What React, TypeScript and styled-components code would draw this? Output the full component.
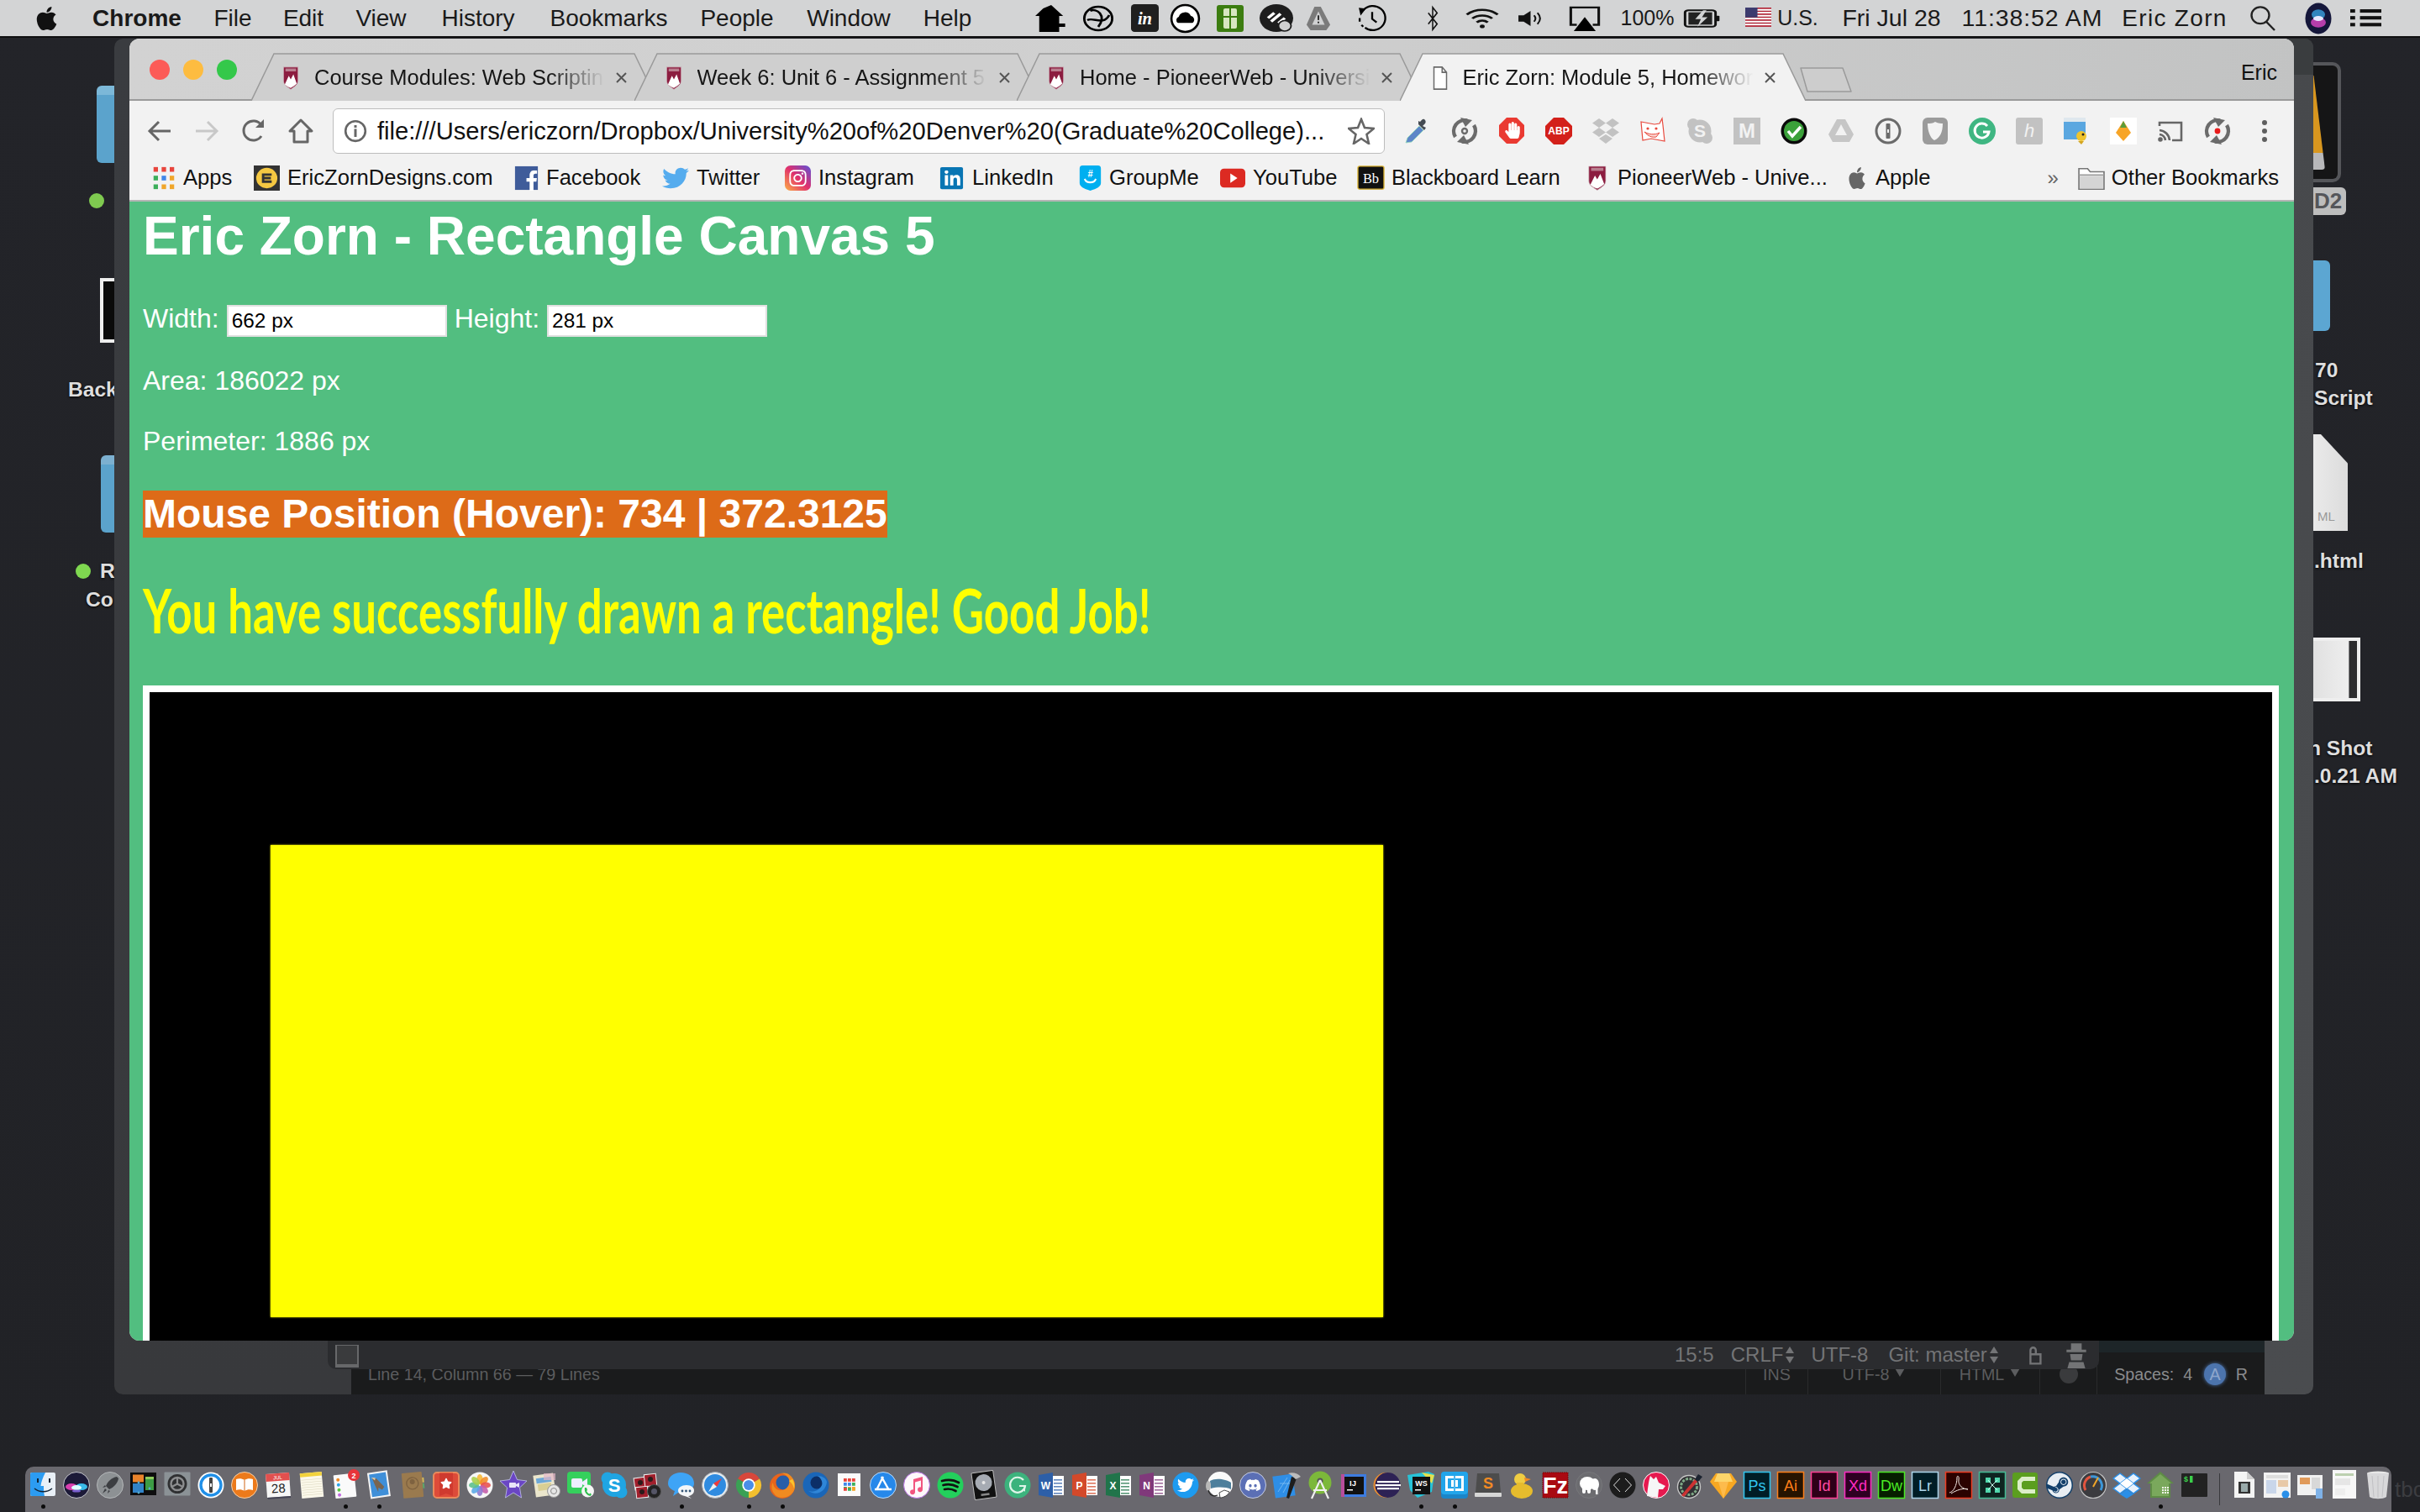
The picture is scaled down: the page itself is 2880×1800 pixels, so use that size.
import React from "react";
import styled, { createGlobalStyle } from "styled-components";
import { FaApple, FaDiscord, FaSteam, FaFacebookF, FaInstagram, FaLinkedinIn, FaTwitter, FaStar, FaHandPaper } from "react-icons/fa";

const SANS = `"Liberation Sans", Arial, sans-serif`;

const Global = createGlobalStyle`
  html, body { margin: 0; padding: 0; background: #242529; }
  * { box-sizing: border-box; }
  #root { width: 2880px; height: 1800px; overflow: hidden; }
`;

const Glyph = styled.svg<{ $s: number; $h?: number }>`
  display: block;
  flex: none;
  width: ${(p) => p.$s}px;
  height: ${(p) => p.$h ?? p.$s}px;
  overflow: visible;
`;

const T = (x: number, y: number, size: number, fill: string, s: string, weight: number = 700, anchor: string = "middle") => (
  <text x={x} y={y} fontSize={size} fill={fill} fontWeight={weight} textAnchor={anchor} fontFamily={SANS}>{s}</text>
);

const office = (c: string, l: string) => (
  <g>
    <rect x="13" y="5" width="18" height="23" fill="#fff" />
    {[9, 13, 17, 21, 25].map((y) => <rect key={y} x="19" y={y} width="10" height="1.6" fill={c} opacity=".75" />)}
    <path d="M1 4 L18 1 V31 L1 28Z" fill={c} />
    {T(9.5, 21, 12, "#fff", l)}
  </g>
);

const adobe = (b: string, bg: string, l: string, c: string) => (
  <g>
    <rect x="0.5" y="0.5" width="31" height="31" fill={bg} stroke={b} strokeWidth="1.5" />
    {T(16, 23, 18, c, l, 400)}
  </g>
);

const syncIcon = (center: React.ReactNode) => (
  <g fill="none" stroke="#6b6b6b" strokeWidth="4.4">
    <path d="M5 23 A13 13 0 0 1 19 3.5" />
    <path d="M27 9 A13 13 0 0 1 13 28.5" />
    <path d="M11 0 L25 3 L17 11Z" fill="#6b6b6b" stroke="none" />
    <path d="M21 32 L7 29 L15 21Z" fill="#6b6b6b" stroke="none" />
    {center}
  </g>
);

const shield = (
  <g>
    <path d="M1 1 H23 V20 C23 26 16 29 12 32 C8 29 1 26 1 20Z" fill="#8c1d40" stroke="#d9c9cd" strokeWidth=".8" />
    <path d="M3 25 L9 13 L12 18 L16 11 L21 24 C18 27 14 29 12 30 C9 29 5 27 3 25Z" fill="#fff" />
    <rect x="4" y="3" width="16" height="4" fill="#b97f8f" />
  </g>
);

const ICONS: Record<string, React.ReactNode> = {
  finder: (
    <g>
      <rect x="1" y="1" width="30" height="28" rx="2" fill="#e9f0f7" />
      <path d="M3 1 H19 C16 7 14 12 13.5 17 H17 C17 21 17 25 18 29 H3 A2 2 0 0 1 1 27 V3 A2 2 0 0 1 3 1Z" fill="#2c9cf2" />
      <rect x="9" y="8" width="2" height="5" fill="#123" />
      <rect x="23" y="8" width="2" height="5" fill="#123" />
      <path d="M6 20 C12 25 21 25 27 20" fill="none" stroke="#123" strokeWidth="1.3" />
    </g>
  ),
  siri: (
    <g>
      <circle cx="16" cy="16" r="15.5" fill="#1c1a38" stroke="#c6c7cc" strokeWidth="1" />
      <ellipse cx="10" cy="18" rx="7" ry="4" fill="#d83fb0" />
      <ellipse cx="22" cy="18" rx="7" ry="4" fill="#39b8e8" />
      <ellipse cx="16" cy="19" rx="6" ry="3" fill="#dff" />
      <ellipse cx="16" cy="23" rx="5" ry="1.5" fill="#7a5fd0" />
    </g>
  ),
  launchpad: (
    <g>
      <circle cx="16" cy="16" r="15.5" fill="#8d9194" stroke="#b4b7b9" />
      <path d="M24 6 C18 7 13 12 11 17 L15 21 C20 19 25 14 26 8Z M11 18 L7 19 L10 16Z M14 22 L13 26 L16 23Z M10 20 L12 22 L7 26Z" fill="#3c3e42" />
    </g>
  ),
  dashboard: (
    <g>
      <rect x="0" y="1" width="31" height="27" fill="#0d0d0e" />
      <rect x="3" y="3.5" width="13" height="9" fill="#e9832b" />
      <rect x="18" y="6" width="10" height="16" fill="#3d9c45" />
      <rect x="18" y="6" width="10" height="3" fill="#8ccb5d" />
      <rect x="3" y="14" width="13" height="11" fill="#3183c8" />
      <circle cx="10" cy="13" r="1.4" fill="#5ac" /><circle cx="23" cy="20" r="1.4" fill="#5ac" /><circle cx="10" cy="25" r="1.4" fill="#5ac" />
    </g>
  ),
  prefs: (
    <g>
      <rect x="0.5" y="0.5" width="31" height="28" rx="1" fill="#8b9296" />
      <circle cx="16" cy="14.5" r="11.5" fill="#2f3032" />
      <circle cx="16" cy="14.5" r="7.5" fill="none" stroke="#8c8d8f" strokeWidth="2.4" />
      <path d="M16 14.5 L16 7 M16 14.5 L9.5 18 M16 14.5 L22.5 18" stroke="#8c8d8f" strokeWidth="2.2" />
    </g>
  ),
  onepass: (
    <g>
      <circle cx="16" cy="16" r="15.5" fill="#fff" />
      <circle cx="16" cy="16" r="12" fill="#fff" stroke="#1f8fe8" strokeWidth="3.4" />
      <rect x="14" y="7" width="4" height="18" rx="1" fill="#444" />
      <rect x="15" y="14" width="2" height="4" fill="#fff" />
    </g>
  ),
  books: (
    <g>
      <circle cx="16" cy="16" r="15.5" fill="#ec7a1b" stroke="#f4cfa8" />
      <path d="M16 10 C13 8 9 8 6 9 V22 C9 21 13 21 16 23 C19 21 23 21 26 22 V9 C23 8 19 8 16 10Z" fill="#fff" />
      <path d="M16 10 V23" stroke="#d06716" strokeWidth="1" />
    </g>
  ),
  calendar: (
    <g transform="rotate(-4 16 16)">
      <rect x="2" y="2" width="28" height="28" fill="#f7f7f7" />
      <rect x="2" y="2" width="28" height="9" fill="#e2504e" />
      {T(16, 9, 6, "#fff", "JUL", 400)}
      {T(16, 25, 15, "#222", "28", 400)}
      <path d="M2 30 H30 V32 H3Z" fill="#445" />
    </g>
  ),
  notes: (
    <g transform="rotate(-5 16 16)">
      <rect x="3" y="1" width="26" height="30" fill="#fbf8ea" />
      <rect x="3" y="1" width="26" height="4.5" fill="#f2d23c" />
      {[9, 12, 15, 18, 21, 24, 27].map((y) => <rect key={y} x="4" y={y} width="24" height=".5" fill="#d8d3ba" />)}
    </g>
  ),
  reminders: (
    <g>
      <g transform="rotate(-6 15 17)">
        <rect x="3" y="3" width="25" height="28" rx="1" fill="#fafafa" />
        <circle cx="8" cy="9" r="2" fill="#f08a24" /><circle cx="8" cy="15" r="2" fill="#2da6ea" /><circle cx="8" cy="21" r="2" fill="#58c943" /><circle cx="8" cy="27" r="2" fill="#c36ce3" />
      </g>
      <circle cx="26" cy="4" r="7" fill="#e8343a" />
      {T(26, 7.5, 9, "#fff", "2")}
    </g>
  ),
  mail: (
    <g transform="rotate(-8 15 16)">
      <rect x="4" y="0" width="24" height="31" fill="#f4f4f4" />
      <rect x="6" y="2" width="20" height="27" fill="#3f8fd8" />
      <path d="M9 7 L14 8 L22 19 L19 22 L15 19 L14 24 L12 18Z" fill="#7a6550" />
      <path d="M8 6 L13 7 L12 10Z" fill="#d8c8a8" />
    </g>
  ),
  contacts: (
    <g transform="rotate(-5 15 16)">
      <rect x="4" y="1" width="24" height="30" rx="1" fill="#9a7a4e" />
      <rect x="28" y="8" width="2" height="6" fill="#d8bb58" /><rect x="28" y="15" width="2" height="6" fill="#5da76a" />
      <circle cx="16" cy="14" r="7" fill="none" stroke="#7e6240" strokeWidth="1.4" />
      <circle cx="16" cy="12" r="3" fill="#7e6240" />
    </g>
  ),
  wunderlist: (
    <g>
      <rect x="1" y="1" width="30" height="30" rx="4" fill="#dd4b39" stroke="#e98a5b" strokeWidth="2" />
      <path d="M8 1.5 H24 V29 L16 26 L8 29Z" fill="#cf3a2f" />
      <FaStar x={9} y={7} size={14} color="#fff" />
    </g>
  ),
  photos: (
    <g>
      <circle cx="16" cy="16" r="15.5" fill="#f6f6f6" />
      {["#f7b733", "#f28c28", "#e8504f", "#c55ba8", "#8c78d0", "#5aa9e6", "#5bbf8a", "#a8cf4a"].map((c, i) => (
        <ellipse key={c} cx="16" cy="9" rx="3.6" ry="6" fill={c} opacity=".88" transform={`rotate(${i * 45} 16 16)`} />
      ))}
    </g>
  ),
  imovie: (
    <g>
      <path d="M16 -1 L20.5 9.5 L32 11 L23.5 19 L25.5 31 L16 25 L6.5 31 L8.5 19 L0 11 L11.5 9.5Z" fill="#6a46c4" stroke="#c3c6ec" strokeWidth=".8" />
      <rect x="11" y="13" width="8" height="6" rx="1" fill="#e8e4f8" /><path d="M19 15 L23 13 V19 L19 17Z" fill="#e8e4f8" />
    </g>
  ),
  preview: (
    <g>
      <rect x="1" y="3" width="24" height="26" fill="#ebe6cd" transform="rotate(-8 13 16)" />
      <rect x="4" y="7" width="18" height="6" fill="#6da8d8" transform="rotate(-8 13 16)" />
      <rect x="5" y="14" width="16" height="8" fill="#d9cf94" transform="rotate(-8 13 16)" />
      <rect x="12" y="2" width="14" height="8" fill="#e4b7c8" opacity=".7" />
      <circle cx="24" cy="23" r="7.5" fill="#e6e6e6" stroke="#999" />
      <circle cx="24" cy="23" r="3.5" fill="none" stroke="#888" />
    </g>
  ),
  facetime: (
    <g>
      <rect x="0" y="0" width="28" height="26" rx="4" fill="#35d05c" />
      <rect x="5" y="8" width="13" height="11" rx="2" fill="#eef" />
      <path d="M18 12 L24 8 V19 L18 15Z" fill="#eef" />
      <circle cx="24.5" cy="23" r="7.5" fill="#f5f5f5" />
      <path d="M21 19 L23 19 L24 22 L23 23 C24 25 25 26 26.5 26.5 L27.5 25.5 L29 27 L27.5 29 C23 28 20 24 21 19Z" fill="#2ebd4e" />
    </g>
  ),
  skype: (
    <g>
      <circle cx="16" cy="16" r="14" fill="#1fa5e3" /><circle cx="8" cy="8" r="7.5" fill="#1fa5e3" /><circle cx="24" cy="24" r="7.5" fill="#1fa5e3" />
      {T(16, 23.5, 22, "#fff", "S")}
    </g>
  ),
  photobooth: (
    <g>
      <rect x="0" y="7" width="14" height="14" fill="#a01f2c" stroke="#eee" transform="rotate(-8 7 14)" />
      <rect x="12" y="3" width="14" height="14" fill="#a01f2c" stroke="#eee" transform="rotate(-6 19 10)" />
      <rect x="2" y="18" width="14" height="13" fill="#a01f2c" stroke="#eee" transform="rotate(-6 9 24)" />
      <circle cx="7" cy="13" r="3" fill="#2b1b1b" /><circle cx="19" cy="9" r="3" fill="#2b1b1b" /><circle cx="9" cy="24" r="3" fill="#2b1b1b" />
      <circle cx="23.5" cy="23.5" r="8" fill="#222" stroke="#555" /><circle cx="23.5" cy="23.5" r="3.5" fill="#556" />
    </g>
  ),
  messages: (
    <g>
      <path d="M15 1 C24 1 31 6 31 14 C31 20 24 25 15 25 L12 25 L6 29 L8 23 C3 21 0 18 0 14 C0 6 7 1 15 1Z" fill="#3ea4f6" />
      <path d="M22 16 C28 16 31 19 31 22.5 C31 26 28 28.5 24 29 L28 32 L20 29 C15 28 12 26 12 22.5 C12 19 16 16 22 16Z" fill="#f4f6f8" />
      <circle cx="17" cy="23" r="1.4" fill="#357" /><circle cx="21.5" cy="23" r="1.4" fill="#357" /><circle cx="26" cy="23" r="1.4" fill="#357" />
    </g>
  ),
  safari: (
    <g>
      <circle cx="16" cy="16" r="15.5" fill="#e9edf0" stroke="#a9aeb3" />
      <circle cx="16" cy="16" r="13" fill="#2f8be0" />
      <path d="M24 8 L14 14 L18 18Z" fill="#ee3b3b" />
      <path d="M8 24 L14 14 L18 18Z" fill="#f0f0f0" />
    </g>
  ),
  chrome: (
    <g>
      <path d="M16 16 L3 8.5 A15 15 0 0 1 29 8.5Z" fill="#d8473b" />
      <path d="M16 16 L29 8.5 A15 15 0 0 1 16 31Z" fill="#f3c02f" />
      <path d="M16 16 L16 31 A15 15 0 0 1 3 8.5Z" fill="#3aa154" />
      <circle cx="16" cy="16" r="7.7" fill="#fff" />
      <circle cx="16" cy="16" r="6" fill="#4a8ee8" />
    </g>
  ),
  firefox: (
    <g>
      <circle cx="16" cy="17" r="15" fill="#e8641c" />
      <circle cx="17" cy="13" r="8.5" fill="#285ea8" />
      <path d="M30 11 C27 3 20 0 14 2 C18 2 21 4 23 7 C26 12 24 20 16 22 C10 23 5 19 5 13 C2 17 3 26 11 30 C20 33 29 28 31 19 C31 16 31 13 30 11Z" fill="#f08b21" />
      <path d="M28 9 C30 12 31 16 30 20 C29 16 27 13 24 11Z" fill="#fbc52e" />
    </g>
  ),
  ffdev: (
    <g>
      <circle cx="16" cy="16" r="15.5" fill="#1a66b8" />
      <circle cx="17" cy="13" r="7.5" fill="#0c2f67" />
      <path d="M29 12 C28 24 16 30 6 22 C10 25 18 24 22 18 C25 14 23 8 18 5 C24 5 28 8 29 12Z" fill="#2f86d8" />
    </g>
  ),
  grid: (
    <g>
      <rect x="2" y="2" width="27" height="27" fill="#fbfbfb" />
      {["#e8453c", "#e8453c", "#e8453c", "#3f87e8", "#3f87e8", "#3cae5a", "#3cae5a", "#f0a62a", "#f0a62a"].map((c, i) => (
        <rect key={i} x={9 + (i % 3) * 5} y={8 + Math.floor(i / 3) * 5} width="3.8" height="3.8" fill={c} />
      ))}
      {["#e8453c", "#3cae5a", "#f0a62a"].map((c, i) => <rect key={c} x={9 + i * 5} y="19" width="3.8" height="3.8" fill={c} />)}
    </g>
  ),
  appstore: (
    <g>
      <circle cx="16" cy="16" r="15.5" fill="#2688ea" stroke="#bcdcfa" />
      <path d="M16 6 L8 22 M14 6 L23 22 M6 21 H26" stroke="#fff" strokeWidth="2.4" fill="none" />
    </g>
  ),
  itunes: (
    <g>
      <circle cx="16" cy="16" r="15.5" fill="#fdf8fb" stroke="#b66fe0" strokeWidth="1" />
      <path d="M12 9 L23 6 V21 A3 3 0 1 1 21 18.5 V10.5 L14 12.5 V24 A3 3 0 1 1 12 21.5Z" fill="#f2557f" />
    </g>
  ),
  spotify: (
    <g>
      <circle cx="16" cy="16" r="15.5" fill="#23d05c" />
      <path d="M6 11 C13 9 20 9.5 26 13 M7.5 16 C13 14.5 19 15 24.5 18 M9 21 C13.5 20 18 20.5 22.5 23" fill="none" stroke="#111" strokeWidth="2.7" strokeLinecap="round" />
    </g>
  ),
  logic: (
    <g transform="rotate(-8 16 16)">
      <rect x="3" y="0" width="26" height="32" rx="1" fill="#111" stroke="#bbb" />
      <circle cx="16" cy="13" r="10" fill="#a6abb3" />
      <circle cx="16" cy="13" r="2" fill="#e8e8e8" />
      <rect x="11" y="26" width="10" height="2.5" fill="#888" />
    </g>
  ),
  gram: (
    <g>
      <circle cx="16" cy="16" r="15.5" fill="#3cb37d" />
      <path d="M23 10 A9 9 0 1 0 25 17 H18" fill="none" stroke="#dff5e9" strokeWidth="2.2" />
      <path d="M22 21 L25 24 V19Z" fill="#dff5e9" />
    </g>
  ),
  word: office("#2d5fa8", "W"),
  ppt: office("#d3492a", "P"),
  excel: office("#20744a", "X"),
  onenote: office("#80397b", "N"),
  twitter: (
    <g>
      <circle cx="16" cy="16" r="15.5" fill="#1d9bf0" />
      <FaTwitter x={6} y={6} size={20} color="#fff" />
    </g>
  ),
  whale: (
    <g>
      <circle cx="17" cy="15" r="15" fill="#fafafa" />
      <path d="M5 11 C12 7 24 9 30 13 V21 C24 18 14 18 6 20Z" fill="#4d7f9c" />
      <ellipse cx="3" cy="17" rx="3" ry="6" fill="#b8b8b8" />
      <path d="M17 31 C21 31 27 28 28 24 L22 22 L16 25Z" fill="#fff" stroke="#222" strokeWidth=".8" />
      <path d="M3 22 C4 28 9 30 14 28" fill="none" stroke="#222" strokeWidth="1.2" />
    </g>
  ),
  discord: (
    <g>
      <circle cx="16" cy="16" r="15.5" fill="#5b6fb5" stroke="#c7cde0" />
      <FaDiscord x={6} y={6} size={20} color="#fff" />
    </g>
  ),
  xcode: (
    <g>
      <rect x="1" y="4" width="24" height="26" fill="#2e8ee6" transform="rotate(-8 13 17)" />
      <path d="M6 24 L17 7 M12 25 L20 10 M8 14 H22" stroke="#8cc7f5" strokeWidth=".7" />
      <path d="M22 6 L28 8 L19 32 L16 31Z" fill="#1d1d1d" />
      <path d="M18 2 C23 0 30 2 33 6 L27 9 C24 6 22 4 18 2Z" fill="#bbb" />
    </g>
  ),
  android: (
    <g>
      <circle cx="16" cy="13" r="13.5" fill="#7cb83a" />
      <circle cx="16" cy="11" r="3.5" fill="#555" />
      <path d="M16 10 L6 32 M16 10 L26 32 M8 22 H24" stroke="#f0f0f0" strokeWidth="2.2" fill="none" />
    </g>
  ),
  ij: (
    <g>
      <rect x="1" y="3" width="26" height="27" fill="#b84d9c" />
      <rect x="5" y="3" width="26" height="27" fill="#3d7ce0" />
      <rect x="5" y="6" width="23" height="21" fill="#111" />
      {T(15, 17, 9.5, "#fff", "IJ")}
      <rect x="8" y="21" width="7" height="1.5" fill="#fff" />
    </g>
  ),
  eclipse: (
    <g>
      <circle cx="14.5" cy="16" r="15" fill="#ed9030" />
      <circle cx="16.5" cy="16" r="15" fill="#2d2255" />
      <rect x="4" y="11" width="26" height="2.2" fill="#fff" />
      <rect x="2" y="15" width="30" height="2.2" fill="#fff" />
      <rect x="4" y="19" width="26" height="2.2" fill="#fff" />
    </g>
  ),
  ws: (
    <g>
      <path d="M0 4 L25 0 L32 3 L29 24 L12 31 L3 22Z" fill="#27c3d8" />
      <path d="M17 1 L32 4 L29 14Z" fill="#e4e04e" />
      <rect x="6" y="6" width="21" height="21" fill="#111" />
      {T(16.5, 17, 9, "#fff", "WS")}
      <rect x="9" y="21" width="7" height="1.5" fill="#fff" />
    </g>
  ),
  brackets: (
    <g>
      <rect x="0" y="0" width="32" height="32" rx="4" fill="#1b85c8" />
      <rect x="0" y="0" width="32" height="27" rx="4" fill="#22a5ea" />
      <rect x="5" y="5" width="22" height="18" fill="#fff" />
      <rect x="8" y="8" width="7" height="12" fill="#22a5ea" /><rect x="17" y="8" width="7" height="12" fill="#22a5ea" />
      <rect x="12" y="10" width="8" height="8" fill="#fff" />
      <rect x="15.2" y="5" width="1.6" height="18" fill="#22a5ea" />
    </g>
  ),
  sublime: (
    <g>
      <path d="M3 2 H29 L31 25 H1Z" fill="#4c4c4c" />
      <rect x="0" y="25" width="32" height="5" rx="1" fill="#d6d6d6" />
      {T(16, 20, 18, "#f08a24", "S")}
    </g>
  ),
  duck: (
    <g>
      <ellipse cx="16" cy="23" rx="13" ry="9" fill="#e6bc2d" />
      <circle cx="14" cy="9" r="7" fill="#efcd42" />
      <path d="M19 7 L27 9 L20 12Z" fill="#f08a24" />
      <rect x="10" y="13" width="8" height="8" fill="#e6bc2d" />
    </g>
  ),
  filezilla: (
    <g>
      <rect x="1" y="1" width="30" height="30" fill="#a90a12" stroke="#7d0000" strokeDasharray="1.5 1" />
      {T(16, 26, 27, "#fff", "Fz", 700)}
    </g>
  ),
  mamp: (
    <g>
      <circle cx="16" cy="16" r="15.5" fill="#6c6c70" stroke="#77777b" />
      <ellipse cx="14" cy="14" rx="9" ry="8" fill="#fff" />
      <ellipse cx="23" cy="15" rx="5" ry="7" fill="#fff" />
      <rect x="8" y="18" width="4" height="8" rx="2" fill="#fff" /><rect x="14" y="18" width="4" height="8" rx="2" fill="#fff" /><rect x="24" y="18" width="2.5" height="9" fill="#fff" />
    </g>
  ),
  code: (
    <g>
      <circle cx="16" cy="16" r="15.5" fill="#1c1c1c" />
      <path d="M13 8 L5.5 16 L13 24 M19 8 L26.5 16 L19 24" fill="none" stroke="#ddd" strokeWidth="1" />
    </g>
  ),
  dog: (
    <g>
      <circle cx="16" cy="16" r="15.5" fill="#e6194f" stroke="#fff" strokeWidth="1" />
      <path d="M9 5 L13 9 L16 6 L19 13 L27 17 L24 21 L19 21 L18 31 L5 29 C6 20 7 11 9 5Z" fill="#f6f6f6" />
    </g>
  ),
  picker: (
    <g>
      <circle cx="15" cy="18" r="13.5" fill="#303034" stroke="#c6c6c6" strokeWidth="1.4" />
      <circle cx="15" cy="18" r="9.5" fill="none" stroke="#7fa986" strokeWidth="3" strokeDasharray="3 1.5" />
      <path d="M6 28 L22 9 L25 12 L9 30Z" fill="#c33" />
      <path d="M22 9 L26 3 L31 6 L26 12Z" fill="#1b2330" />
    </g>
  ),
  sketch: (
    <g>
      <path d="M7 2 H25 L32 12 L16 32 L0 12Z" fill="#f7a823" />
      <path d="M9 2 H23 L27 12 H5Z" fill="#fdd56a" />
      <path d="M10 12 H22 L16 32Z" fill="#fdbb4c" />
    </g>
  ),
  ps: adobe("#31c5f0", "#001d26", "Ps", "#31c5f0"),
  ai: adobe("#ff7f18", "#261300", "Ai", "#ff7f18"),
  id: adobe("#ff3f94", "#2e0018", "Id", "#ff4ba0"),
  xd: adobe("#ff2bc2", "#2e0022", "Xd", "#ff2bc2"),
  dw: adobe("#4bea25", "#061e00", "Dw", "#4bea25"),
  lr: adobe("#add5ec", "#001d26", "Lr", "#add5ec"),
  acrobat: (
    <g>
      <rect x="0.5" y="0.5" width="31" height="31" fill="#2b0200" stroke="#ee3d23" strokeWidth="1.5" />
      <path d="M5 25 C10 24 14 16 14 7 C14 4 17 5 16 10 C15 16 21 21 27 21 C22 19 13 22 7 26" fill="none" stroke="#f1e9e4" strokeWidth="1" />
    </g>
  ),
  muse: (
    <g>
      <rect x="0.5" y="0.5" width="31" height="31" fill="#0f2420" stroke="#45bb95" strokeWidth="1.5" />
      <rect x="8" y="7" width="6" height="6" fill="#50d6ab" /><rect x="19" y="7" width="6" height="6" fill="#50d6ab" /><rect x="8" y="19" width="6" height="6" fill="#50d6ab" /><rect x="19" y="19" width="6" height="6" fill="#50d6ab" />
      <path d="M11 10 L16 16 L22 10 M11 22 L16 16 L22 22" stroke="#cfe" strokeWidth="1" fill="none" />
    </g>
  ),
  camtasia: (
    <g>
      <rect x="0" y="1" width="30" height="30" rx="3" fill="#5b9e1f" />
      <path d="M27 6 H11 L6 11 V21 L11 26 H27 V21 H13 L11 19 V13 L13 11 H27Z" fill="#dcefc8" />
    </g>
  ),
  steam: (
    <g>
      <circle cx="16" cy="16" r="16" fill="#123f6a" />
      <FaSteam x={1} y={1} size={30} color="#e8eef3" />
    </g>
  ),
  istat: (
    <g>
      <circle cx="16" cy="16" r="15.5" fill="#3b3b3f" stroke="#c4c4c4" strokeWidth="1.2" />
      <path d="M7 22 A11 11 0 0 1 13 6" fill="none" stroke="#e2553f" strokeWidth="3" />
      <path d="M13 6 A11 11 0 0 1 25 22" fill="none" stroke="#3d96d8" strokeWidth="3" />
      <path d="M16 18 L22 7" stroke="#f0a62a" strokeWidth="2" />
    </g>
  ),
  dropbox: (
    <g>
      <path d="M8 2 L16 8 L8 14 L16 20 L8 26 L0 20 L8 14 L0 8Z M24 2 L32 8 L24 14 L32 20 L24 26 L16 20 L24 14 L16 8Z" fill="#e8f2fc" stroke="#2a8fe8" strokeWidth="1.5" strokeLinejoin="round" />
      <path d="M8 14 L16 8 L24 14 L16 20Z" fill="#fff" />
      <path d="M8 27 L16 21 L24 27 L16 32Z" fill="#2a8fe8" />
    </g>
  ),
  house: (
    <g>
      <path d="M16 0 L32 14 L28 14 V31 H4 V14 H0Z" fill="#5e8c46" />
      <path d="M16 3 L29 14 H26 V29 H6 V14 H3Z" fill="#7aa85c" />
      {[0, 1, 2].map((r) => [0, 1, 2].map((c) => <rect key={`${r}${c}`} x={18 + c * 3} y={18 + r * 3} width="2" height="2" fill="#f0f4e8" />))}
    </g>
  ),
  terminal: (
    <g>
      <rect x="1" y="2" width="31" height="28" rx="1" fill="#222" />
      {T(4, 12, 9, "#3bd04a", "$", 700, "start")}
      <rect x="11" y="5" width="3.5" height="8" fill="#3bd04a" />
    </g>
  ),
  doc: (
    <g>
      <path d="M5 0 H20 L29 9 V31 H5Z" fill="#f4f4f4" />
      <path d="M20 0 L29 9 H20Z" fill="#cfcfcf" />
      <rect x="10" y="12" width="14" height="14" fill="#333" />
      <rect x="13" y="14" width="8" height="10" fill="#9aa" />
    </g>
  ),
  shot1: (
    <g>
      <rect x="0" y="1" width="32" height="30" fill="#f3f3f3" />
      <rect x="3" y="4" width="26" height="4" fill="#ddd" />
      <rect x="3" y="10" width="12" height="16" fill="#c9d6ea" /><rect x="17" y="10" width="12" height="8" fill="#e8c9a8" />
      <circle cx="26" cy="27" r="4.5" fill="#2a8fe8" />
    </g>
  ),
  shot2: (
    <g>
      <rect x="0" y="4" width="30" height="24" fill="#f1f1f1" />
      <rect x="3" y="7" width="12" height="8" fill="#e09a5a" /><rect x="17" y="7" width="10" height="14" fill="#d8d8d8" />
      <rect x="22" y="20" width="8" height="12" fill="#7fb2e8" />
    </g>
  ),
  shot3: (
    <g>
      <rect x="2" y="-2" width="28" height="34" fill="#f7f7f7" />
      <rect x="5" y="2" width="22" height="3" fill="#bcd0b0" />
      <rect x="5" y="8" width="18" height="8" fill="#e6e6e6" />
      <rect x="5" y="20" width="12" height="8" fill="#eee" />
    </g>
  ),
  trash: (
    <g>
      <ellipse cx="16" cy="2" rx="13" ry="2.5" fill="#e8e8e8" />
      <path d="M3 2 L6 30 C10 33 22 33 26 30 L29 2Z" fill="#d8d8da" />
      <path d="M9 5 L11 30 M16 5 V31 M23 5 L21 30" stroke="#c0c0c4" strokeWidth="1" />
    </g>
  ),

  /* extensions */
  dropper: (
    <g>
      <path d="M2 30 L4 24 L18 10 L23 15 L9 29Z" fill="#5d86c8" stroke="#9db" strokeWidth=".8" />
      <path d="M17 8 L24 15 L26 12 L22 10 L25 7 A3.5 3.5 0 0 0 24 2 C22 1 21 3 19 5 L17 4Z" fill="#444b52" />
    </g>
  ),
  sync: syncIcon(<circle cx="16" cy="16" r="3" strokeWidth="2.4" />),
  hand: (
    <g>
      <path d="M10 0 H22 L31 9 V22 L22 31 H10 L1 22 V9Z" fill="#ea3a32" />
      <FaHandPaper x={7} y={5} size={20} color="#fff" />
    </g>
  ),
  abp: (
    <g>
      <path d="M10 0 H22 L32 10 V22 L22 32 H10 L0 22 V10Z" fill="#d3201a" />
      {T(16, 20, 12, "#fff", "ABP")}
    </g>
  ),
  dbxgray: (
    <g fill="#c2c2c2">
      <path d="M8 1 L16 6.5 L8 12 L0 6.5Z M24 1 L32 6.5 L24 12 L16 6.5Z M8 12 L16 17.5 L8 23 L0 17.5Z M24 12 L32 17.5 L24 23 L16 17.5Z M8 25 L16 20 L24 25 L16 31Z" />
    </g>
  ),
  redface: (
    <g>
      <path d="M2 5 L18 8 L24 7 L27 1 L28 9 L30 28 L14 25 L4 27Z" fill="#fff" stroke="#e8483c" strokeWidth="1.2" />
      <circle cx="10" cy="13" r="1.6" fill="#e8483c" /><circle cx="20" cy="13" r="1.6" fill="#e8483c" />
      <path d="M6 17 C11 20 18 21 24 18 L20 23 C15 24 10 22 6 17Z" fill="#fbd5d0" stroke="#e8483c" />
    </g>
  ),
  skypegray: (
    <g>
      <circle cx="16" cy="16" r="13.5" fill="#c2c2c2" /><circle cx="8" cy="8" r="7" fill="#c2c2c2" /><circle cx="24" cy="24" r="7" fill="#c2c2c2" />
      {T(16, 23, 21, "#f2f2f2", "S")}
    </g>
  ),
  mgray: (
    <g>
      <rect x="0" y="0" width="32" height="32" fill="#c2c2c2" />
      {T(16, 24, 24, "#f2f2f2", "M", 700)}
    </g>
  ),
  check: (
    <g>
      <circle cx="16" cy="16" r="15.5" fill="#0a0a0a" />
      <circle cx="16" cy="16" r="12" fill="#3ba13a" />
      <path d="M9 16 L14 22 L24 11" stroke="#fff" strokeWidth="3.5" fill="none" />
    </g>
  ),
  drivegray: <path d="M11 2 H21 L31 20 L26 29 H6 L1 20Z M16 8 L9 21 H23Z" fill="#c6c6c6" fillRule="evenodd" />,
  onegray: (
    <g>
      <circle cx="16" cy="16" r="14" fill="#f2f2f2" stroke="#6b6b6b" strokeWidth="3" />
      <rect x="13.5" y="7" width="5" height="18" rx="1" fill="#6b6b6b" />
      <rect x="15" y="14" width="2" height="4" fill="#f2f2f2" />
    </g>
  ),
  shieldgray: (
    <g>
      <rect x="1" y="0" width="30" height="32" rx="6" fill="#9b9b9b" />
      <path d="M16 5 C20 7 23 7 25 7 C25 17 22 24 15 27 C10 24 7 16 7 7 C10 7 13 7 16 5Z" fill="#f3f3f3" />
    </g>
  ),
  gramext: (
    <g>
      <circle cx="16" cy="16" r="16" fill="#3fb682" />
      <path d="M22 10 A8.5 8.5 0 1 0 24 17 H17" fill="none" stroke="#fff" strokeWidth="3" />
    </g>
  ),
  hgray: (
    <g>
      <rect x="0" y="0" width="32" height="32" rx="3" fill="#c2c2c2" />
      <text x="16" y="23" fontSize="22" fill="#f2f2f2" fontStyle="italic" textAnchor="middle" fontFamily={SANS}>h</text>
    </g>
  ),
  bird: (
    <g>
      <rect x="1" y="0" width="26" height="26" fill="#5aa7e0" />
      <rect x="1" y="0" width="26" height="5" fill="#dfe8ee" />
      <circle cx="22" cy="22" r="6" fill="#f0c42c" />
      <circle cx="24" cy="20" r="1.5" fill="#222" />
      <path d="M18 28 L22 32 L25 28Z" fill="#d4a520" />
    </g>
  ),
  diamond: (
    <g>
      <rect x="0" y="0" width="32" height="32" fill="#fff" />
      <path d="M16 4 L25 18 L16 28 L7 18Z" fill="#f7a527" />
      <path d="M16 4 L20 12 H12Z" fill="#5a9c3a" />
    </g>
  ),
  cast: (
    <g fill="none" stroke="#666" strokeWidth="2.6">
      <path d="M3 10 V6 H29 V27 H18" />
      <path d="M3 15 A13 13 0 0 1 15 27 M3 20 A8 8 0 0 1 10 27" />
      <circle cx="4" cy="26" r="1.5" fill="#666" />
    </g>
  ),
  syncred: syncIcon(<circle cx="16" cy="16" r="3.4" fill="#e81b1b" stroke="none" />),
  dots: (
    <g fill="#5f5f5f"><circle cx="16" cy="6" r="3" /><circle cx="16" cy="16" r="3" /><circle cx="16" cy="26" r="3" /></g>
  ),

  /* menu bar */
  mhouse: <path d="M16 0 L28 13 H24 V22 H30 V26 H24 V32 H4 V13 H0 L8 4 Z" fill="#000" />,
  mcc: (
    <g fill="none" stroke="#000" strokeWidth="2.4">
      <circle cx="16" cy="16" r="14" />
      <path d="M5 18 C11 14 21 25 27 12 M8 7 C14 3 25 12 16 26" />
    </g>
  ),
  min: (
    <g>
      <rect x="0" y="0" width="32" height="32" rx="4" fill="#1f1f1f" />
      <text x="16" y="23" fontSize="20" fill="#fff" fontStyle="italic" fontWeight="700" textAnchor="middle" fontFamily={`"Liberation Serif", serif`}>in</text>
    </g>
  ),
  mcloud: (
    <g>
      <circle cx="16" cy="16" r="15" fill="#fff" stroke="#000" strokeWidth="2.4" />
      <path d="M8 21 A4 4 0 0 1 9 14 A7 7 0 0 1 22 13 A4.5 4.5 0 0 1 24 21Z" fill="#000" />
    </g>
  ),
  mgreen: (
    <g>
      <rect x="0" y="0" width="32" height="32" rx="3" fill="#3c7d10" />
      <rect x="8" y="4" width="16" height="24" rx="2" fill="#d8e6c0" />
      <path d="M16 4 V28 M8 14 H24" stroke="#3c7d10" strokeWidth="2" />
    </g>
  ),
  mlink: (
    <g>
      <circle cx="16" cy="16" r="16" fill="#1d1d1d" />
      <path d="M11 20 L20 11 M8 16 L14 10 M18 22 L24 16" stroke="#fff" strokeWidth="3" />
      <circle cx="24" cy="25" r="6" fill="#d0d0d0" stroke="#1d1d1d" strokeWidth="1.5" />
    </g>
  ),
  mdrive: (
    <g>
      <path d="M11 1 H19 L31 24 L26 31 H6 L1 24Z" fill="#7b7b7b" />
      <path d="M16 7 L8 24 H24Z" fill="#d0d1d2" />
      <rect x="15" y="12" width="2" height="6" fill="#222" /><rect x="15" y="20" width="2" height="2" fill="#222" />
    </g>
  ),
  mtm: (
    <g fill="none" stroke="#000" strokeWidth="2.2">
      <path d="M6 7 A14 14 0 1 1 8 27" />
      <path d="M16 9 V17 L21 21" />
      <path d="M1 4 L9 5 L3 13Z" fill="#000" stroke="none" />
      <path d="M2 16 V20 M4 24 L6 26" />
    </g>
  ),
  mbt: <path d="M9 9 L23 23 L16 30 V2 L23 9 L9 23" fill="none" stroke="#111" strokeWidth="2" />,
  mwifi: (
    <g fill="none" stroke="#111" strokeWidth="2.6">
      <path d="M2 11 C10 3 22 3 30 11" /><path d="M7 16 C12 11 20 11 25 16" /><path d="M11 21 C14 18 18 18 21 21" />
      <circle cx="16" cy="26" r="2.2" fill="#111" stroke="none" />
    </g>
  ),
  msound: (
    <g fill="#111">
      <path d="M2 11 H8 L16 4 V28 L8 21 H2Z" />
      <path d="M20 11 C22 14 22 18 20 21 M24 7 C28 13 28 19 24 25" fill="none" stroke="#111" strokeWidth="2" />
    </g>
  ),
  mair: (
    <g>
      <path d="M8 24 H2 V2 H30 V24 H24" fill="none" stroke="#111" strokeWidth="2.6" />
      <path d="M16 14 L27 32 H5Z" fill="#000" />
    </g>
  ),
  mbat: (
    <g>
      <rect x="1" y="4" width="27" height="24" rx="3" fill="none" stroke="#111" strokeWidth="2.2" />
      <rect x="28.5" y="12" width="3" height="8" rx="1" fill="#111" />
      <rect x="4" y="7" width="21" height="18" fill="#222" />
      <path d="M17 4 L10 17 H15 L12 28 L21 14 H16 L20 4Z" fill="#d2d3d4" />
    </g>
  ),
  mflag: (
    <g>
      {[0, 1, 2, 3, 4, 5, 6].map((i) => <rect key={i} x="0" y={i * 4.5} width="32" height="2.3" fill="#b22234" />)}
      {[0, 1, 2, 3, 4, 5].map((i) => <rect key={i} x="0" y={i * 4.5 + 2.3} width="32" height="2.2" fill="#fff" />)}
      <rect x="0" y="0" width="15" height="15" fill="#3c3b6e" />
    </g>
  ),
  msearch: (
    <g fill="none" stroke="#222" strokeWidth="2.4">
      <circle cx="13" cy="12" r="10.5" /><path d="M20 20 L30 31" />
    </g>
  ),
  msiri: (
    <g>
      <circle cx="16" cy="16" r="15.5" fill="#14163a" />
      <ellipse cx="16" cy="12" rx="8" ry="5" fill="#3aa1e0" opacity=".8" />
      <ellipse cx="16" cy="20" rx="9" ry="5" fill="#c642b8" opacity=".9" />
      <ellipse cx="16" cy="16" rx="6" ry="2.5" fill="#e8e8ff" />
    </g>
  ),
  mlist: (
    <g fill="#111">
      {[5, 15, 25].map((y) => <g key={y}><rect x="0" y={y - 2.5} width="5" height="5" /><rect x="10" y={y - 2.5} width="22" height="5" /></g>)}
    </g>
  ),

  /* favicons */
  apps: (
    <g>
      {["#e8453c", "#e8453c", "#e8453c", "#3cae5a", "#3f87e8", "#f0a62a", "#3cae5a", "#f0a62a", "#f0a62a"].map((c, i) => (
        <rect key={i} x={2 + (i % 3) * 11} y={2 + Math.floor(i / 3) * 11} width="6" height="6" fill={c} />
      ))}
    </g>
  ),
  ezd: (
    <g>
      <rect x="0" y="0" width="32" height="32" fill="#333" />
      <circle cx="16" cy="16" r="13" fill="#f5c842" />
      <path d="M10 10 H22 V13 H13 V14.5 H21 V17.5 H13 V19 H22 V22 H10Z" fill="#333" />
    </g>
  ),
  fb: (
    <g>
      <rect x="1" y="1" width="30" height="30" fill="#3f5c9a" />
      <FaFacebookF x={10} y={6} size={26} color="#fff" />
    </g>
  ),
  tw: <FaTwitter x={0} y={0} size={32} color="#55acee" />,
  ig: (
    <g>
      <defs>
        <linearGradient id="igg" x1="0" y1="1" x2="1" y2="0">
          <stop offset="0" stopColor="#fcb045" /><stop offset=".5" stopColor="#e1306c" /><stop offset="1" stopColor="#5b51d8" />
        </linearGradient>
      </defs>
      <rect x="0" y="0" width="32" height="32" rx="7" fill="url(#igg)" />
      <FaInstagram x={4} y={4} size={24} color="#fff" />
    </g>
  ),
  li: (
    <g>
      <rect x="2" y="2" width="28" height="28" rx="2" fill="#0875b3" />
      <FaLinkedinIn x={6} y={6} size={22} color="#fff" />
    </g>
  ),
  gm: (
    <g>
      <path d="M5 0 H27 A4 4 0 0 1 31 4 V22 C31 27 25 29 16 32 C7 29 1 27 1 22 V4 A4 4 0 0 1 5 0Z" fill="#00aff0" />
      {T(16, 15, 13, "#fff", "#")}
      <path d="M8 17 C11 23 21 23 24 17" fill="none" stroke="#fff" strokeWidth="2.4" />
    </g>
  ),
  yt: (
    <g>
      <rect x="0" y="4" width="32" height="24" rx="5" fill="#dc2a22" />
      <path d="M13 10 L22 16 L13 22Z" fill="#fff" />
    </g>
  ),
  bb: (
    <g>
      <rect x="0" y="1" width="32" height="29" rx="2" fill="#111" stroke="#d9b130" strokeWidth="1.4" />
      <text x="16" y="22" fontSize="17" fill="#fff" textAnchor="middle" fontFamily={`"Liberation Serif", serif`}>Bb</text>
    </g>
  ),
  shield: <g transform="scale(1.05 .98) translate(2 0)">{shield}</g>,
  appleb: <FaApple x={0} y={0} size={32} color="#666" />,
  folder: (
    <g>
      <path d="M2 4 H12 L15 8 H31 V30 H2Z" fill="#fff" stroke="#777" strokeWidth="1.6" />
      <path d="M2 12 H31" stroke="#999" strokeWidth="1.4" />
      <rect x="3" y="13" width="27" height="16" fill="#d4d4d4" />
    </g>
  ),
  pagefav: <path d="M6 1 H19 L26 8 V31 H6Z M19 1 V8 H26" fill="#fff" stroke="#6a6a6a" strokeWidth="2" />,
};

const Icon = ({ name, s, h }: { name: string; s: number; h?: number }) => (
  <Glyph $s={s} $h={h} viewBox="0 0 32 32" preserveAspectRatio="none">{ICONS[name]}</Glyph>
);

/* ─── menu bar ─── */
const MenuBar = styled.header`
  display: flex;
  align-items: center;
  height: 45px;
  padding: 0 46px 0 0;
  background: #d3d4d5;
  border-bottom: 2px solid #0f0f10;
  color: #1a1a1a;
  font: 400 28px ${SANS};
  white-space: nowrap;
`;
const MenuSlot = styled.div<{ $w: number; $ml: number; $bold?: boolean; $size?: number; $ls?: number }>`
  flex: none;
  display: flex;
  align-items: center;
  justify-content: center;
  width: ${(p) => p.$w}px;
  margin-left: ${(p) => p.$ml}px;
  font-weight: ${(p) => (p.$bold ? 700 : 400)};
  font-size: ${(p) => p.$size ?? 28}px;
  letter-spacing: ${(p) => p.$ls ?? 0}px;
`;
const menuText: [string, number, number, boolean?][] = [
  ["Chrome", 108, 40, true], ["File", 42, 39], ["Edit", 48, 39], ["View", 61, 38], ["History", 92, 39],
  ["Bookmarks", 143, 38], ["People", 88, 37], ["Window", 102, 38], ["Help", 59, 37],
];
type St = { i?: string; t?: string; w: number; ml: number; h?: number; size?: number; ls?: number };
const status: St[] = [
  { i: "mhouse", w: 38, ml: 75, h: 32 },
  { i: "mcc", w: 38, ml: 18, h: 32 },
  { i: "min", w: 33, ml: 20, h: 33 },
  { i: "mcloud", w: 35, ml: 14, h: 34 },
  { i: "mgreen", w: 32, ml: 20, h: 32 },
  { i: "mlink", w: 40, ml: 19, h: 33 },
  { i: "mdrive", w: 30, ml: 15, h: 30 },
  { i: "mtm", w: 34, ml: 32, h: 33 },
  { i: "mbt", w: 24, ml: 43, h: 30 },
  { i: "mwifi", w: 42, ml: 26, h: 30 },
  { i: "msound", w: 33, ml: 20, h: 24 },
  { i: "mair", w: 38, ml: 29, h: 30 },
  { t: "100%", w: 59, ml: 26, size: 25 },
  { i: "mbat", w: 43, ml: 14, h: 26 },
  { i: "mflag", w: 31, ml: 30, h: 25 },
  { t: "U.S.", w: 43, ml: 10, size: 25 },
  { t: "Fri Jul 28", w: 120, ml: 30, size: 28.5 },
  { t: "11:38:52 AM", w: 169, ml: 23, size: 28.5, ls: 0.9 },
  { t: "Eric Zorn", w: 118, ml: 26, size: 28, ls: 1.3 },
  { i: "msearch", w: 32, ml: 30, h: 30 },
  { i: "msiri", w: 32, ml: 34, h: 38 },
  { i: "mlist", w: 37, ml: 22, h: 26 },
];

/* ─── desktop canvas ─── */
const Screen = styled.div`
  display: flex;
  flex-direction: column;
  width: 2880px;
  height: 1800px;
  background: linear-gradient(180deg, #232429, #212226);
  overflow: hidden;
`;
const Desktop = styled.main`
  position: relative;
  flex: 1;
`;
const BackWindow = styled.section`
  position: absolute;
  left: 136px;
  top: 1px;
  width: 2617px;
  height: 1614px;
  display: flex;
  border-radius: 10px;
  overflow: hidden;
  background: #1a1b1c;
`;
const Rail = styled.div<{ $w: number; $tone: string }>`
  flex: none;
  position: relative;
  width: ${(p) => p.$w}px;
  background: ${(p) => p.$tone};
`;
const RailCap = styled.div`
  height: 43px;
  background: #3a3d3f;
`;
const EditorMain = styled.div`
  flex: 1;
  display: flex;
  flex-direction: column;
  justify-content: flex-end;
`;
const TealStripe = styled.div`
  height: 14px;
  margin-left: 2080px;
  background: #1d2528;
`;
const BackBar = styled.div`
  display: flex;
  align-items: center;
  height: 50px;
  padding: 2px 0 0 20px;
  background: #1a1b1c;
  color: #5c5d5f;
  font: 400 19.7px ${SANS};
  white-space: nowrap;
  overflow: hidden;
`;
const BackCell = styled.div<{ $w: number; $light?: boolean }>`
  flex: none;
  display: flex;
  align-items: center;
  justify-content: center;
  gap: 6px;
  width: ${(p) => p.$w}px;
  height: 50px;
  margin-top: -2px;
  padding-top: 2px;
  border-left: 1px solid #2a2b2c;
  color: ${(p) => (p.$light ? "#8a8b8d" : "#5c5d5f")};
`;
const LineInfo = styled.div`
  flex: none;
  width: 1639px;
`;
const Arrow = styled.span`
  width: 0;
  height: 0;
  margin-top: -6px;
  border-left: 7px solid transparent;
  border-right: 7px solid transparent;
  border-top: 12px solid #5c5d5f;
`;
const Blob = styled.span`
  width: 22px;
  height: 22px;
  border-radius: 50%;
  background: #3a3b3d;
`;
const AvatarA = styled.span`
  display: flex;
  align-items: center;
  justify-content: center;
  width: 26px;
  height: 26px;
  margin-left: 8px;
  border-radius: 50%;
  background: #4c74ad;
  color: #8ea6cc;
  box-shadow: 0 0 4px #4c74ad;
`;
const StatusWindow = styled.section`
  position: absolute;
  left: 390px;
  top: 1551px;
  width: 2108px;
  height: 34px;
  display: flex;
  align-items: center;
  padding-left: 9px;
  background: #2b2c2f;
  border-radius: 0 0 10px 10px;
  color: #737476;
  font: 400 24px ${SANS};
  white-space: nowrap;
`;
const StatusText = styled.span<{ $ml: number }>`
  display: flex;
  align-items: center;
  margin-left: ${(p) => p.$ml}px;
  gap: 2px;
`;
const Updown = styled.svg`
  width: 12px;
  height: 22px;
`;
const PanelToggle = styled.span`
  display: block;
  width: 28px;
  height: 27px;
  margin-top: 2px;
  border: 2px solid #67686a;
  border-bottom-width: 4px;
  border-top-width: 1px;
  background: #3a3b3d;
`;

/* ─── desktop leftovers ─── */
const DeskPiece = styled.div<{ $x: number; $y: number; $w: number; $h: number; $bg: string; $r?: string }>`
  position: absolute;
  left: ${(p) => p.$x}px;
  top: ${(p) => p.$y - 45}px;
  width: ${(p) => p.$w}px;
  height: ${(p) => p.$h}px;
  background: ${(p) => p.$bg};
  border-radius: ${(p) => p.$r ?? "0"};
`;
const FramedThumb = styled(DeskPiece)`
  border: 4px solid #eee;
`;
const DriveFrame = styled(DeskPiece)`
  border: 4px solid #55565a;
  border-left: none;
  border-radius: 0 10px 10px 0;
`;
const DriveBody = styled.div`
  width: 27px;
  height: 112px;
  margin-top: 12px;
  border-radius: 0 0 4px 0;
  clip-path: polygon(0 0, 50% 0, 100% 100%, 0 100%);
  background: linear-gradient(180deg, #d8961f, #d8961f 82%, #b8b8ba 82%);
`;
const DeskLabel = styled.div<{ $x: number; $y: number; $tone?: string }>`
  position: absolute;
  left: ${(p) => p.$x}px;
  top: ${(p) => p.$y - 45 - 14}px;
  color: ${(p) => p.$tone ?? "#dedede"};
  font: 700 24.6px/28px ${SANS};
  white-space: nowrap;
  text-shadow: 0 1px 3px #000;
`;
const Pill = styled.div`
  position: absolute;
  left: 2753px;
  top: 178px;
  width: 39px;
  height: 33px;
  padding-left: 1px;
  background: #bdbdbd;
  border-radius: 0 6px 6px 0;
  color: #55565a;
  font: 700 26px/33px ${SANS};
`;
const HtmlDoc = styled.div`
  position: absolute;
  left: 2730px;
  top: 472px;
  width: 64px;
  height: 115px;
  padding: 89px 4px 0 28px;
  background: linear-gradient(90deg, #f2f2f2, #dcdcdc);
  clip-path: polygon(0 0, 50% 0, 100% 30%, 100% 100%, 0 100%);
  color: #999;
  font: 400 15px ${SANS};
`;

/* ─── browser ─── */
const Browser = styled.section`
  position: absolute;
  left: 154px;
  top: 1px;
  width: 2576px;
  height: 1550px;
  display: flex;
  flex-direction: column;
  border-radius: 12px;
  overflow: hidden;
  background: #f2f2f2;
`;
const TabStrip = styled.div`
  display: flex;
  flex: none;
  height: 74px;
  background: linear-gradient(100deg, #d2d2d2, #cfcfcf 50%, #c2c3c3);
  border-bottom: 2px solid #9a9a9a;
`;
const Lights = styled.div`
  display: flex;
  gap: 16px;
  margin: 25px 0 0 24px;
`;
const Light = styled.span<{ $c: string }>`
  width: 24px;
  height: 24px;
  border-radius: 50%;
  background: ${(p) => p.$c};
`;
const Tabs = styled.div`
  display: flex;
  align-self: flex-end;
  margin: 0 0 -2px 17px;
`;
const Tab = styled.div<{ $active?: boolean }>`
  position: relative;
  display: flex;
  align-items: center;
  width: 483px;
  height: 57px;
  padding: 1px 0 0 36px;
  color: #161616;
  font: 400 25.5px ${SANS};
  z-index: ${(p) => (p.$active ? 2 : 1)};
  & + & {
    margin-left: -27.5px;
  }
`;
const TabShape = styled.svg`
  position: absolute;
  inset: 0;
  width: 483px;
  height: 57px;
`;
const TabFav = styled.div`
  position: relative;
  flex: none;
  width: 39px;
  margin-top: 1px;
`;
const TabTitle = styled.div`
  position: relative;
  width: 349px;
  overflow: hidden;
  white-space: nowrap;
  mask-image: linear-gradient(90deg, #000 80%, transparent 99%);
`;
const TabClose = styled.svg`
  position: relative;
  flex: none;
  width: 15px;
  height: 15px;
  margin-left: 9px;
`;
const NewTab = styled.svg`
  flex: none;
  align-self: flex-start;
  width: 66px;
  height: 32px;
  margin: 33px 0 0 -10px;
`;
const Profile = styled.div`
  margin: 26px 20px 0 auto;
  color: #111;
  font: 400 25px ${SANS};
`;
const Toolbar = styled.div`
  display: flex;
  flex: none;
  align-items: center;
  height: 68px;
  padding: 4px 0 0 8px;
`;
const NavSlot = styled.div`
  display: flex;
  justify-content: center;
  width: 56px;
`;
const Omnibox = styled.div`
  display: flex;
  align-items: center;
  flex: none;
  width: 1252px;
  height: 54px;
  margin-left: 10px;
  padding: 0 11px 0 12px;
  background: #fff;
  border: 1px solid #bdbdbd;
  border-radius: 6px;
  color: #111;
  font: 400 29.15px ${SANS};
`;
const Url = styled.span`
  margin-left: 12px;
  white-space: nowrap;
`;
const Star = styled.svg`
  flex: none;
  width: 32px;
  height: 32px;
  margin-left: auto;
`;
const Extensions = styled.div`
  display: flex;
  align-items: center;
  gap: 24px;
  margin-left: 23px;
`;
const BookmarksBar = styled.nav`
  display: flex;
  flex: none;
  align-items: center;
  height: 52px;
  padding: 0 18px 3px 27px;
  border-bottom: 2px solid #b5b5b5;
  color: #111;
  font: 400 25.6px ${SANS};
  white-space: nowrap;
`;
const Bm = styled.div<{ $w: number; $iw: number }>`
  display: grid;
  grid-template-columns: ${(p) => p.$iw}px auto;
  align-items: center;
  flex: none;
  width: ${(p) => p.$w}px;
`;
const Chevron = styled.span`
  margin-left: auto;
  margin-right: 22px;
  color: #666;
  font-size: 24px;
`;
const FolderBm = styled.div`
  display: flex;
  align-items: center;
  gap: 8px;
`;

/* ─── page content ─── */
const Page = styled.div`
  flex: 1;
  padding: 0 18px 0 16px;
  background: #52be80;
  overflow: hidden;
  color: #fff;
  font: 400 32px/37px ${SANS};
`;
const Title = styled.h1`
  margin: 0;
  padding-top: 4px;
  font: 700 64px/74px ${SANS};
`;
const SizeRow = styled.div`
  display: flex;
  align-items: center;
  height: 40px;
  margin-top: 41px;
`;
const SizeInput = styled.input`
  width: 262px;
  height: 38px;
  margin: 6px 9px 0 9px;
  padding: 2px 4px;
  border: 2px solid #e0e0e0;
  border-radius: 0;
  background: #fff;
  color: #000;
  outline: none;
  font: 400 24.4px ${SANS};
`;
const Stat = styled.p`
  margin: 0;
  &:first-of-type {
    margin-top: 36px;
  }
  & + & {
    margin-top: 35px;
  }
`;
const Mouse = styled.h2`
  display: table;
  margin: 40px 0 0;
  background: #dd6b18;
  font: 700 48px/56px ${SANS};
`;
const Success = styled.h2`
  height: 84px;
  margin: 52px 0 0;
  color: #ffff00;
  font: 700 72px/68px "Lato", sans-serif;
  white-space: nowrap;
`;
const SuccessInk = styled.span`
  display: inline-block;
  transform: scaleX(0.733);
  transform-origin: left center;
`;
const CanvasFrame = styled.div`
  height: 900px;
  margin-top: 40px;
  padding-top: 182px;
  padding-left: 144px;
  background: #000;
  border: 8px solid #fff;
`;
const Drawn = styled.div`
  width: 1324px;
  height: 562px;
  background: #ffff00;
  box-shadow: 0 0 2px #ffff00;
`;

/* ─── dock ─── */
const DockRow = styled.footer`
  position: relative;
  flex: none;
  display: flex;
  height: 54px;
`;
const Dock = styled.div`
  display: flex;
  gap: 8px;
  width: 2822px;
  margin-left: 30px;
  padding: 6px 0 0 5px;
  background: #69686e;
  border-radius: 10px 10px 0 0;
`;
const DockItem = styled.div`
  display: flex;
  flex-direction: column;
  align-items: center;
  width: 32px;
`;
const DockDot = styled.span<{ $on: boolean }>`
  width: 5px;
  height: 5px;
  margin-top: 7px;
  border-radius: 50%;
  background: ${(p) => (p.$on ? "#0a0a0a" : "transparent")};
`;
const DockSep = styled.span`
  flex: none;
  width: 1px;
  height: 38px;
  margin: 2px 4px 0 6px;
  background: #39393d;
`;
const Cutoff = styled.span`
  align-self: center;
  margin-left: 4px;
  color: #3c3d41;
  font: 400 26px ${SANS};
`;

const dockNames = [
  "finder", "siri", "launchpad", "dashboard", "prefs", "onepass", "books", "calendar", "notes", "reminders", "mail", "contacts", "wunderlist",
  "photos", "imovie", "preview", "facetime", "skype", "photobooth", "messages", "safari", "chrome", "firefox", "ffdev", "grid", "appstore",
  "itunes", "spotify", "logic", "gram", "word", "ppt", "excel", "onenote", "twitter", "whale", "discord", "xcode", "android",
  "ij", "eclipse", "ws", "brackets", "sublime", "duck", "filezilla", "mamp", "code", "dog", "picker", "sketch", "ps",
  "ai", "id", "xd", "dw", "lr", "acrobat", "muse", "camtasia", "steam", "istat", "dropbox", "house", "terminal",
];
const running = new Set(["finder", "reminders", "mail", "messages", "chrome", "firefox", "ws", "brackets", "house"]);
const dockDocs = ["doc", "shot1", "shot2", "shot3", "trash"];
const exts = ["dropper", "sync", "hand", "abp", "dbxgray", "redface", "skypegray", "mgray", "check", "drivegray", "onegray", "shieldgray", "gramext", "hgray", "bird", "diamond", "cast", "syncred", "dots"];
const bookmarks: [string, string, number, number][] = [
  ["apps", "Apps", 121, 37], ["ezd", "EricZornDesigns.com", 310, 40], ["fb", "Facebook", 176, 38], ["tw", "Twitter", 146, 41],
  ["ig", "Instagram", 183, 40], ["li", "LinkedIn", 167, 40], ["gm", "GroupMe", 168, 36], ["yt", "YouTube", 164, 39],
  ["bb", "Blackboard Learn", 272, 40], ["shield", "PioneerWeb - Unive...", 309, 37], ["appleb", "Apple", 100, 35],
];
const tabs = [
  { t: "Course Modules: Web Scripting", i: "shield" },
  { t: "Week 6: Unit 6 - Assignment 5", i: "shield" },
  { t: "Home - PioneerWeb - University of Denver", i: "shield" },
  { t: "Eric Zorn: Module 5, Homework", i: "pagefav", active: true },
];

const UpDownMark = () => (
  <Updown viewBox="0 0 12 22"><path d="M6 1 L11 9 H1Z M6 21 L11 13 H1Z" fill="#737476" /></Updown>
);

export default function App() {
  return (
    <Screen>
      <Global />
      <MenuBar>
        <MenuSlot $w={27} $ml={42}><FaApple size={32} color="#111" /></MenuSlot>
        {menuText.map(([t, w, ml, b]) => (
          <MenuSlot key={t} $w={w} $ml={ml} $bold={b}>{t}</MenuSlot>
        ))}
        {status.map((s, i) => (
          <MenuSlot key={i} $w={s.w} $ml={s.ml} $size={s.size} $ls={s.ls}>
            {s.i ? <Icon name={s.i} s={s.w} h={s.h} /> : s.t}
          </MenuSlot>
        ))}
      </MenuBar>

      <Desktop>
        {/* icons peeking out left */}
        <DeskPiece $x={115} $y={102} $w={30} $h={92} $bg="linear-gradient(180deg,#7cb8d8 0 12%,#5ba3cc 12%)" $r="6px 0 0 6px" />
        <DeskPiece $x={106} $y={230} $w={18} $h={18} $bg="#7fca50" $r="50%" />
        <FramedThumb $x={119} $y={331} $w={30} $h={77} $bg="#0a0a0a" />
        <DeskLabel $x={81} $y={464}>Back</DeskLabel>
        <DeskPiece $x={120} $y={542} $w={30} $h={92} $bg="linear-gradient(180deg,#7cb0d0 0 12%,#5ba3cc 12%)" $r="6px 0 0 6px" />
        <DeskPiece $x={90} $y={671} $w={18} $h={18} $bg="#7fd850" $r="50%" />
        <DeskLabel $x={119} $y={680}>R</DeskLabel>
        <DeskLabel $x={102} $y={714}>Co</DeskLabel>

        {/* icons peeking out right */}
        <DriveFrame $x={2740} $y={74} $w={46} $h={143} $bg="#151516"><DriveBody /></DriveFrame>
        <Pill>D2</Pill>
        <DeskPiece $x={2740} $y={310} $w={33} $h={84} $bg="#5ca6d2" $r="0 6px 6px 0" />
        <DeskLabel $x={2755} $y={441}>70</DeskLabel>
        <DeskLabel $x={2754} $y={474}>Script</DeskLabel>
        <HtmlDoc>ML</HtmlDoc>
        <DeskLabel $x={2754} $y={668}>.html</DeskLabel>
        <FramedThumb $x={2735} $y={759} $w={74} $h={76} $bg="linear-gradient(90deg,#dcdcdc,#eeeeee 84%,#2c2c2e 87%)" />
        <DeskLabel $x={2747} $y={891}>n Shot</DeskLabel>
        <DeskLabel $x={2754} $y={924}>.0.21 AM</DeskLabel>

        <BackWindow>
          <Rail $w={282} $tone="linear-gradient(180deg,#3a3c40,#38393c)" />
          <EditorMain>
            <TealStripe />
            <BackBar>
              <LineInfo>Line 14, Column 66 — 79 Lines</LineInfo>
              <BackCell $w={74}>INS</BackCell>
              <BackCell $w={158}>UTF-8 <Arrow /></BackCell>
              <BackCell $w={118}>HTML <Arrow /></BackCell>
              <BackCell $w={68}><Blob /></BackCell>
              <BackCell $w={200} $light>Spaces:&nbsp; 4<AvatarA>A</AvatarA>&nbsp;R</BackCell>
            </BackBar>
          </EditorMain>
          <Rail $w={60} $tone="linear-gradient(180deg,#47494c,#4a4c4f)"><RailCap /></Rail>
        </BackWindow>

        <StatusWindow>
          <PanelToggle />
          <StatusText $ml={1566}>15:5</StatusText>
          <StatusText $ml={20}>CRLF<UpDownMark /></StatusText>
          <StatusText $ml={19}>UTF-8</StatusText>
          <StatusText $ml={24}>Git: master<UpDownMark /></StatusText>
          <StatusText $ml={35}>
            <Glyph $s={16} $h={24} viewBox="0 0 20 28"><path d="M3 13 V7 A4 4 0 0 1 11 7 V13 M3 13 H18 V27 H3Z" fill="none" stroke="#737476" strokeWidth="3" /></Glyph>
          </StatusText>
          <StatusText $ml={27}>
            <Glyph $s={28} $h={34} viewBox="0 0 26 32"><path d="M7 3 H19 V10 H24 V13 H2 V10 H7Z M6 15 H20 L19 22 H7Z M5 24 H21 L23 31 H3Z" fill="#737476" /></Glyph>
          </StatusText>
        </StatusWindow>

        <Browser>
          <TabStrip>
            <Lights>
              <Light $c="#fc5b57" /><Light $c="#fdbc40" /><Light $c="#34c84a" />
            </Lights>
            <Tabs>
              {tabs.map((tab) => (
                <Tab key={tab.t} $active={tab.active}>
                  <TabShape viewBox="0 0 483 57">
                    <path d="M0 57 L27 1 H456 L483 57" fill={tab.active ? "#f2f2f2" : "#cfcfcf"} stroke="#9a9a9a" strokeWidth="1.5" />
                  </TabShape>
                  <TabFav><Icon name={tab.i} s={24} h={28} /></TabFav>
                  <TabTitle>{tab.t}</TabTitle>
                  <TabClose viewBox="0 0 15 15"><path d="M2 2 L13 13 M13 2 L2 13" stroke="#555" strokeWidth="2" /></TabClose>
                </Tab>
              ))}
            </Tabs>
            <NewTab viewBox="0 0 66 32">
              <path d="M4 2 H54 L64 30 H12Z" fill="#cdcdcd" stroke="#9a9a9a" strokeWidth="1.5" strokeLinejoin="round" />
            </NewTab>
            <Profile>Eric</Profile>
          </TabStrip>

          <Toolbar>
            <NavSlot>
              <Glyph $s={32} viewBox="0 0 32 32"><path d="M29 16 H5 M15 5 L4 16 L15 27" fill="none" stroke="#666" strokeWidth="3" /></Glyph>
            </NavSlot>
            <NavSlot>
              <Glyph $s={32} viewBox="0 0 32 32"><path d="M3 16 H27 M17 5 L28 16 L17 27" fill="none" stroke="#c8c8c8" strokeWidth="3" /></Glyph>
            </NavSlot>
            <NavSlot>
              <Glyph $s={32} viewBox="0 0 32 32"><path d="M25 22 A11.5 11.5 0 1 1 25 9" fill="none" stroke="#666" strokeWidth="3" /><path d="M28 2 V12 H18Z" fill="#666" /></Glyph>
            </NavSlot>
            <NavSlot>
              <Glyph $s={32} viewBox="0 0 32 32"><path d="M16 3 L29 16 H24 V29 H8 V16 H3Z" fill="none" stroke="#666" strokeWidth="3" strokeLinejoin="round" /></Glyph>
            </NavSlot>
            <Omnibox>
              <Glyph $s={28} viewBox="0 0 32 32">
                <circle cx="16" cy="16" r="13.5" fill="none" stroke="#666" strokeWidth="3" />
                <rect x="14.3" y="13" width="3.4" height="11" fill="#666" /><rect x="14.3" y="8" width="3.4" height="3.4" fill="#666" />
              </Glyph>
              <Url>file:///Users/ericzorn/Dropbox/University%20of%20Denver%20(Graduate%20College)...</Url>
              <Star viewBox="0 0 32 32"><path d="M16 2 L20 12 L31 13 L22.5 20 L25 31 L16 25 L7 31 L9.5 20 L1 13 L12 12Z" fill="none" stroke="#666" strokeWidth="2.6" /></Star>
            </Omnibox>
            <Extensions>
              {exts.map((e) => <Icon key={e} name={e} s={32} />)}
            </Extensions>
          </Toolbar>

          <BookmarksBar>
            {bookmarks.map(([i, t, w, iw]) => (
              <Bm key={t} $w={w} $iw={iw}><Icon name={i} s={iw - 8 > 32 ? 32 : iw - 9} h={30} />{t}</Bm>
            ))}
            <Chevron>»</Chevron>
            <FolderBm><Icon name="folder" s={33} h={30} />Other Bookmarks</FolderBm>
          </BookmarksBar>

          <Page>
            <Title>Eric Zorn - Rectangle Canvas 5</Title>
            <SizeRow>
              Width:<SizeInput defaultValue="662 px" />Height:<SizeInput defaultValue="281 px" />
            </SizeRow>
            <Stat>Area: 186022 px</Stat>
            <Stat>Perimeter: 1886 px</Stat>
            <Mouse>Mouse Position (Hover): 734 | 372.3125</Mouse>
            <Success><SuccessInk>You have successfully drawn a rectangle! Good Job!</SuccessInk></Success>
            <CanvasFrame><Drawn /></CanvasFrame>
          </Page>
        </Browser>
      </Desktop>

      <DockRow>
        <Dock>
          {dockNames.map((n) => (
            <DockItem key={n}><Icon name={n} s={32} /><DockDot $on={running.has(n)} /></DockItem>
          ))}
          <DockSep />
          {dockDocs.map((n) => (
            <DockItem key={n}><Icon name={n} s={32} /></DockItem>
          ))}
        </Dock>
        <Cutoff>tbo</Cutoff>
      </DockRow>
    </Screen>
  );
}
